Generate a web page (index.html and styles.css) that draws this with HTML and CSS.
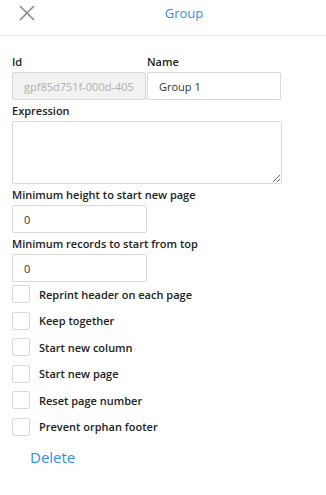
FILE: index.html
```html
<!DOCTYPE html>
<html lang="en">
<head>
    <meta charset="UTF-8">
    <meta name="viewport" content="width=device-width, initial-scale=1.0">
    <title>Group</title>
    <link rel="stylesheet" href="styles.css">
</head>
<body>
    <div class="header">
        <button class="close-btn" type="button" aria-label="Close">
            <svg width="16" height="16" viewBox="0 0 16 16">
                <path d="M1 1 L15 15 M15 1 L1 15" stroke="#8a8a8a" stroke-width="1.6" fill="none"/>
            </svg>
        </button>
        <div class="title">Group</div>
    </div>

    <form class="panel">
        <div class="row">
            <div class="field half">
                <label>Id</label>
                <input type="text" class="readonly" value="gpf85d751f-000d-405" readonly>
            </div>
            <div class="field half">
                <label>Name</label>
                <input type="text" value="Group 1">
            </div>
        </div>

        <div class="field">
            <label>Expression</label>
            <textarea></textarea>
        </div>

        <div class="field">
            <label>Minimum height to start new page</label>
            <input type="text" class="short" value="0">
        </div>

        <div class="field">
            <label>Minimum records to start from top</label>
            <input type="text" class="short" value="0">
        </div>

        <div class="checks">
            <label class="check"><span class="box"></span>Reprint header on each page</label>
            <label class="check"><span class="box"></span>Keep together</label>
            <label class="check"><span class="box"></span>Start new column</label>
            <label class="check"><span class="box"></span>Start new page</label>
            <label class="check"><span class="box"></span>Reset page number</label>
            <label class="check"><span class="box"></span>Prevent orphan footer</label>
        </div>

        <a class="delete-link" href="#">Delete</a>
    </form>
</body>
</html>
```

FILE: styles.css
```css
body {
    margin: 0;
    font-family: 'Open Sans', sans-serif;
    color: #222;
    background: #fff;
}
.header {
    height: 35px;
    border-bottom: 1px solid #e6e6e6;
    display: flex;
    align-items: center;
    position: relative;
}
.close-btn {
    background: none;
    border: none;
    padding: 0;
    margin-left: 19px;
    margin-top: -9px;
    width: 16px;
    height: 16px;
    cursor: pointer;
}
.title {
    position: absolute;
    left: 0;
    right: 0;
    top: 4px;
    text-align: center;
    padding-left: 42px;
    font-size: 13px;
    color: #2f8df5;
    pointer-events: none;
}
.panel {
    padding: 19px 12px 0 12px;
    width: 270px;
}
.row {
    display: flex;
    gap: 1px;
}
.field {
    display: flex;
    flex-direction: column;
    margin-bottom: 4px;
}
.field.half {
    width: 134px;
}
.field label {
    font-size: 11px;
    font-weight: 600;
    line-height: 14px;
    margin-bottom: 3px;
}
input[type="text"] {
    box-sizing: border-box;
    height: 28px;
    border: 1px solid #d9d9d9;
    border-radius: 2px;
    padding: 0 11px;
    font-family: inherit;
    font-size: 11px;
    color: #333;
    outline: none;
}
input.readonly {
    background: #f2f2f2;
    color: #b0b0b0;
}
input.short {
    width: 135px;
}
textarea {
    box-sizing: border-box;
    height: 63px;
    width: 270px;
    border: 1px solid #d9d9d9;
    border-radius: 2px;
    font-family: inherit;
    resize: vertical;
}
.checks {
    display: flex;
    flex-direction: column;
    gap: 8.6px;
    margin-top: -1px;
}
.check {
    display: flex;
    align-items: center;
    font-size: 11px;
    font-weight: 600;
    height: 18px;
}
.box {
    box-sizing: border-box;
    width: 18px;
    height: 18px;
    border: 1px solid #d9d9d9;
    border-radius: 2px;
    margin-right: 9px;
}
.delete-link {
    display: inline-block;
    margin: 11px 0 0 18px;
    font-size: 15px;
    color: #2f8df5;
    text-decoration: none;
}
```
